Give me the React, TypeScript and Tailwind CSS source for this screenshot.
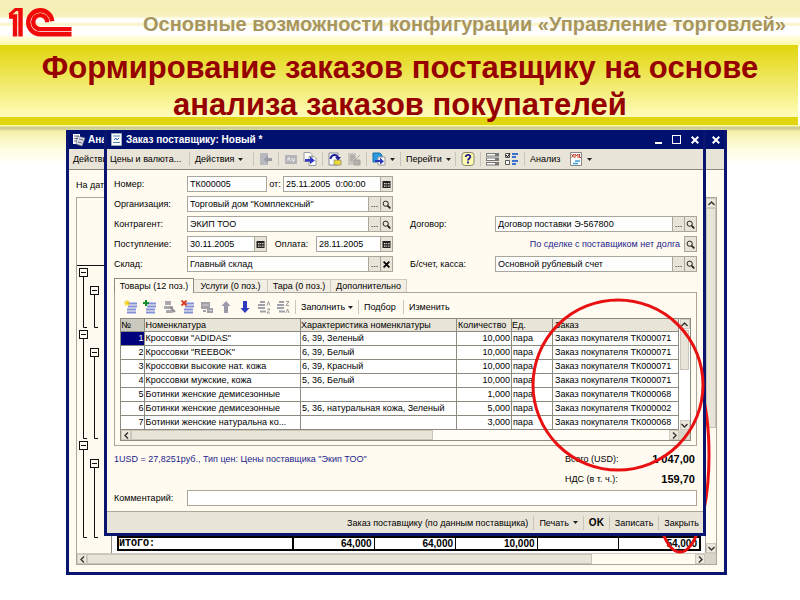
import React from 'react'
import type { ReactNode } from 'react'

interface OrderRow {
  name: string
  spec: string
  qty: string
  order: string
}

const rows: OrderRow[] = [
  { name: 'Кроссовки "ADIDAS"', spec: '6, 39, Зеленый', qty: '10,000', order: 'ТК000071' },
  { name: 'Кроссовки "REEBOK"', spec: '6, 39, Белый', qty: '10,000', order: 'ТК000071' },
  { name: 'Кроссовки высокие нат. кожа', spec: '6, 39, Красный', qty: '10,000', order: 'ТК000071' },
  { name: 'Кроссовки мужские, кожа', spec: '5, 36, Белый', qty: '10,000', order: 'ТК000071' },
  { name: 'Ботинки женские демисезонные', spec: '', qty: '1,000', order: 'ТК000068' },
  {
    name: 'Ботинки женские демисезонные',
    spec: '5, 36, натуральная кожа, Зеленый',
    qty: '5,000',
    order: 'ТК000002',
  },
  { name: 'Ботинки женские натуральна ко...', spec: '', qty: '3,000', order: 'ТК000068' },
]

function Logo() {
  return (
    <svg viewBox="0 0 66 32" className="w-[66px] h-8 shrink-0" role="img" aria-label="1C">
      <g fill="none" stroke="#f00a0a" strokeWidth="4.400">
        <path d="M12.500 1V29.500" />
        <path d="M1 9.500H7V29.500" />
        <path d="M1.500 8L7.500 2.500H12.500" strokeWidth="3.200" />
        <path d="M44.200 14.300A12 12 0 1 0 32.200 27.300H63.500" />
        <path d="M39.200 15.300A7 7 0 1 0 32.200 22.100H63.500" />
      </g>
    </svg>
  )
}

function Caret() {
  return (
    <svg viewBox="0 0 5 3" className="w-[5px] h-[3px] shrink-0">
      <path d="M0 0H5L2.500 3Z" fill="#222" />
    </svg>
  )
}

function Icon({ children }: { children: ReactNode }) {
  return (
    <svg viewBox="0 0 14 14" className="w-3.5 h-3.5 shrink-0">
      {children}
    </svg>
  )
}

function Sep() {
  return <span className="w-px h-3.5 shrink-0 bg-[#c9c5ba]" />
}

function IconButton({ label, children }: { label: string; children: ReactNode }) {
  return (
    <button type="button" aria-label={label} className="flex items-center gap-1 shrink-0">
      {children}
    </button>
  )
}

function SheetLines({ color }: { color: string }) {
  return <path d="M4 3.500H13M4 6.500H13M3 9.500H12M3 12.500H12" stroke={color} strokeWidth="2" />
}

function CalendarGlyph() {
  return (
    <svg viewBox="0 0 9 9" className="w-[9px] h-[9px]">
      <path d="M0.500 1H8.500V8H0.500Z" fill="#222" />
      <path d="M2 3H3.500V4.200H2ZM4.300 3H5.300V4.200H4.300ZM6.200 3H7.500V4.200H6.200ZM2 5.500H3.500V6.700H2ZM4.300 5.500H5.300V6.700H4.300ZM6.200 5.500H7.500V6.700H6.200Z" fill="#e9e4d8" />
    </svg>
  )
}

function SearchGlyph() {
  return (
    <svg viewBox="0 0 9 9" className="w-[9px] h-[9px]" fill="none" stroke="#222">
      <circle cx="3.700" cy="3.700" r="2.600" />
      <path d="M5.600 5.600L8.300 8.300" strokeWidth="1.700" />
    </svg>
  )
}

function CloseGlyph({ size = 'w-[7px] h-[7px]' }: { size?: string }) {
  return (
    <svg viewBox="0 0 8 8" className={size} stroke="currentColor" strokeWidth="2">
      <path d="M0.700 0.700L7.300 7.300M7.300 0.700L0.700 7.300" />
    </svg>
  )
}

type Addon = 'calendar' | 'more' | 'search' | 'clear'

function AddonButton({ kind }: { kind: Addon }) {
  return (
    <button
      type="button"
      aria-label={kind}
      className="w-3 h-full shrink-0 flex items-center justify-center border-l border-[#a9a69c] bg-[#e9e4d8] text-black"
    >
      {kind === 'calendar' && <CalendarGlyph />}
      {kind === 'search' && <SearchGlyph />}
      {kind === 'clear' && <CloseGlyph />}
      {kind === 'more' && '...'}
    </button>
  )
}

interface FieldProps {
  id: string
  value: string
  addons?: Addon[]
  className?: string
}

function Field({ id, value, addons = [], className = '' }: FieldProps) {
  return (
    <div className={`flex h-4 min-w-0 border border-[#a9a69c] bg-white ${className}`}>
      <input id={id} defaultValue={value} className="w-full min-w-0 px-0.5 bg-white outline-none" />
      {addons.map((kind) => (
        <AddonButton key={kind} kind={kind} />
      ))}
    </div>
  )
}

function ScrollArrow({ dir }: { dir: 'up' | 'down' | 'left' | 'right' }) {
  const d = {
    up: 'M1.500 6L4.500 3L7.500 6',
    down: 'M1.500 3L4.500 6L7.500 3',
    left: 'M6 1.500L3 4.500L6 7.500',
    right: 'M3 1.500L6 4.500L3 7.500',
  }[dir]
  return (
    <button
      type="button"
      aria-label={dir}
      className="w-[10px] h-[10px] shrink-0 border border-[#cfcabd] bg-[#ece7dc] flex items-center justify-center"
    >
      <svg viewBox="0 0 9 9" className="w-[9px] h-[9px] shrink-0" fill="none" stroke="#333" strokeWidth="1.400">
        <path d={d} />
      </svg>
    </button>
  )
}

function OrderTree() {
  const groups = [
    { y: 70, end: 129, child: 88 },
    { y: 132, end: 240, child: 150 },
    { y: 243, end: 339, child: 261 },
  ]
  return (
    <svg viewBox="0 0 34 355" className="w-[34px] h-[355px] shrink-0" fill="none" stroke="#111">
      <path d="M0 67.500H34" />
      {groups.map((g) => (
        <g key={g.y}>
          <path d={`M6.500 ${g.y + 9}V${g.end + 0.5}H10M17.500 ${g.child + 9}V${g.end + 0.5}H21`} />
          <rect x="2.500" y={g.y + 0.5} width="8" height="8" fill="#fffbf0" />
          <path d={`M4 ${g.y + 4.5}H9`} />
          <rect x="13.500" y={g.child + 0.5} width="8" height="8" fill="#fffbf0" />
          <path d={`M15 ${g.child + 4.5}H20`} />
        </g>
      ))}
    </svg>
  )
}

function AnalysisWindow() {
  return (
    <section className="border-[3px] border-t-0 border-[#0a1570] bg-[#fffbf0]">
      <header className="h-[19px] pl-[3px] pr-1 flex items-center justify-between bg-[#00106e] text-white">
        <h2 className="flex items-center gap-0.5 text-[10px] font-bold">
          <Icon>
            <path d="M1 1H8V11H1Z" fill="#fff" />
            <path d="M5 3L13 5L10 13L4 11Z" fill="#d8dce8" stroke="#777" strokeWidth=".6" />
            <path d="M2 3H7M2 5.500H6M2 8H5M7 6L11 7M6 9L10 10" stroke="#667" />
          </Icon>
          Анализ
        </h2>
        <button type="button" aria-label="Закрыть окно">
          <CloseGlyph size="w-2 h-2" />
        </button>
      </header>
      <div className="h-[21px] pl-1 flex items-center border-b border-[#8d8a80] bg-[#e9e4d8]">
        <button type="button">Действия</button>
      </div>
      <p className="h-[27px] pl-[7px] pt-[9px]">На дату:</p>
      <div className="ml-[7px] mr-[7px] mb-[7px] border border-[#a9a69c]">
        <div className="flex">
          <OrderTree />
          <div className="flex-1 min-w-0 flex flex-col justify-end border-l border-[#8d8a80] bg-white pl-[5px] pr-1 pb-0.5">
            <table className="w-full table-fixed border-2 border-black text-[10px] leading-[11px] font-bold">
              <colgroup>
                <col className="w-[30%]" />
                <col className="w-[14%]" />
                <col className="w-[14%]" />
                <col className="w-[14%]" />
                <col className="w-[14%]" />
                <col className="w-[14%]" />
              </colgroup>
              <tbody>
                <tr className="text-right">
                  <th className="border-r-2 border-black text-left font-['Liberation_Mono',monospace]">
                    ИТОГО:
                  </th>
                  <td className="border-r border-black pr-0.5">64,000</td>
                  <td className="border-r border-black pr-0.5">64,000</td>
                  <td className="border-r border-black pr-0.5">10,000</td>
                  <td className="border-r border-black" />
                  <td className="pr-0.5">54,000</td>
                </tr>
              </tbody>
            </table>
          </div>
          <div className="w-[11px] shrink-0 flex flex-col border-l border-[#a9a69c]">
            <ScrollArrow dir="up" />
            <div className="h-[220px] mb-auto border border-[#c9c5ba] bg-[#e9e4d8]" />
            <ScrollArrow dir="down" />
          </div>
        </div>
        <div className="flex h-[11px] border-t border-[#cfcabd]">
          <ScrollArrow dir="left" />
          <div className="w-[79%] mr-auto border border-[#c9c5ba] bg-[#e9e4d8]" />
          <ScrollArrow dir="right" />
          <span className="w-[11px] bg-[#d9d4c8]" />
        </div>
      </div>
    </section>
  )
}

function OrderToolbar() {
  return (
    <div className="h-[21px] pl-[3px] flex items-center gap-[5px] border-b border-[#8d8a80] bg-[#e9e4d8] whitespace-nowrap">
      <button type="button" className="w-[74px] text-left">Цены и валюта...</button>
      <Sep />
      <button type="button" className="w-[53px] flex items-center gap-1">
        Действия <Caret />
      </button>
      <Sep />
      <IconButton label="Найти в списке">
        <Icon>
          <path d="M1 1H9V13H1Z" fill="#b9b9c0" />
          <path d="M13 6H9V3.500L5 7.500L9 11.500V9H13Z" fill="#9b9ba8" />
        </Icon>
      </IconButton>
      <Sep />
      <IconButton label="Обновить">
        <Icon>
          <path d="M1 3H13V12H1Z" fill="#b4b4ba" />
          <path d="M4 9V6H6M10 6V9H8M4 6L7 9M10 9L7 6" stroke="#eee" fill="none" />
        </Icon>
      </IconButton>
      <IconButton label="Скопировать">
        <Icon>
          <path d="M1 0.500H7L9 2.500V9.500H1ZM6 4.500H11L13 6.500V13.500H6Z" fill="#fff" stroke="#999" />
          <path d="M2 4V7H7V4.500L12 8.500L7 12V9.500H2Z" fill="#3038c8" />
        </Icon>
      </IconButton>
      <Sep />
      <IconButton label="Провести">
        <Icon>
          <path d="M1 1H10V13H1Z" fill="#fff" stroke="#889" />
          <path d="M6 8H13V13H6Z" fill="#e9d93c" stroke="#776" strokeWidth=".6" />
          <path d="M2.500 7C3 2 9 1.500 10 6" stroke="#20209a" strokeWidth="2" fill="none" />
          <path d="M7 5H13L10 8.500Z" fill="#20209a" />
        </Icon>
      </IconButton>
      <IconButton label="Отменить проведение">
        <Icon>
          <path d="M1 1H9V13H1Z" fill="#c9c6c0" />
          <path d="M3 4H8M3 6H8M3 8H6" stroke="#999" />
          <path d="M7 8H13V13H7ZM13 3L8 8" fill="#b4b1aa" stroke="#a5a29b" />
        </Icon>
      </IconButton>
      <Sep />
      <IconButton label="Ввести на основании">
        <Icon>
          <path d="M1 1H8L10 3V10H1Z" fill="#2a9be0" stroke="#1870a8" />
          <path d="M6 5H13V13H6Z" fill="#fff" stroke="#999" />
          <path d="M3 4V8H8V5.500L12 9.500L8 12.500V10H3Z" fill="#2838b8" />
        </Icon>
        <Caret />
      </IconButton>
      <Sep />
      <button type="button" className="w-11 flex items-center gap-1">
        Перейти <Caret />
      </button>
      <Sep />
      <IconButton label="Справка">
        <Icon>
          <rect x="1" y="0.500" width="12" height="13" rx="3" fill="#fffbb0" stroke="#8a8a70" />
          <path d="M4.800 5C4.800 2 9.500 2.300 9.300 5C9.200 6.500 7 6.500 7 8.500M7 9.500V11.500" stroke="#1c1c8c" strokeWidth="1.800" fill="none" />
        </Icon>
      </IconButton>
      <Sep />
      <IconButton label="Строки">
        <Icon>
          <path d="M0 1H13V4.500H0ZM0 5.500H13V9H0ZM0 10H13V13.500H0Z" fill="#777" />
          <path d="M1 2H9V3.500H1ZM1 6.500H9V8H1ZM1 11H9V12.500H1Z" fill="#fff" />
        </Icon>
      </IconButton>
      <IconButton label="Отбор">
        <Icon>
          <path d="M0.500 1.500H4.500V5.500H0.500ZM0.500 8.500H4.500V12.500H0.500Z" fill="#fff" stroke="#555" />
          <path d="M1 3L2.500 5L5 1" stroke="#111" fill="none" />
          <path d="M7 2H13M7 5H11M7 9H13M7 12H11" stroke="#3d6fd0" strokeWidth="2" />
        </Icon>
      </IconButton>
      <Sep />
      <button type="button" className="w-[34px] text-left">Анализ</button>
      <IconButton label="XML">
        <Icon>
          <path d="M1.500 0.500H12.500V13.500H1.500Z" fill="#fff" stroke="#888" />
          <path d="M2.500 2L5 5.500M5 2L2.500 5.500M6 6V2L7.500 4L9 2V6M10.500 2V5.500H12" stroke="#c8402c" strokeWidth="1" fill="none" />
          <path d="M6 9H11M4 11.500H9" stroke="#3ca0dc" strokeWidth="1.500" />
        </Icon>
        <Caret />
      </IconButton>
    </div>
  )
}

function RowsToolbar() {
  return (
    <div className="h-3.5 pl-1 flex items-center gap-[5px] whitespace-nowrap">
      <IconButton label="Добавить">
        <Icon>
          <SheetLines color="#8392d8" />
          <path d="M3 0V6M0 3H6M1 1L5 5M5 1L1 5" stroke="#f0d000" />
        </Icon>
      </IconButton>
      <IconButton label="Скопировать строку">
        <Icon>
          <SheetLines color="#8392d8" />
          <path d="M3 0V6M0 3H6" stroke="#109030" strokeWidth="2" />
        </Icon>
      </IconButton>
      <IconButton label="Изменить строку">
        <Icon>
          <path d="M3 1H9V5H3ZM2 6H11V9H2ZM4 10H11V13H4Z" fill="#a8a8ae" />
          <path d="M8 7L13 12" stroke="#8c8c94" strokeWidth="2" />
        </Icon>
      </IconButton>
      <IconButton label="Удалить">
        <Icon>
          <SheetLines color="#8392d8" />
          <path d="M0.500 0.500L5.500 5.500M5.500 0.500L0.500 5.500" stroke="#e03818" strokeWidth="1.800" />
        </Icon>
      </IconButton>
      <IconButton label="Записать строку">
        <Icon>
          <path d="M1 2H10V9H1ZM7 8H13V13H7ZM3 10H6V12H3Z" fill="#a0a0a6" />
          <path d="M2.500 5H8.500M9 10.500H12" stroke="#d8d8d8" />
        </Icon>
      </IconButton>
      <IconButton label="Вверх">
        <Icon>
          <path d="M7 1L11.500 6H9V13H5V6H2.500Z" fill="#9a9aac" />
        </Icon>
      </IconButton>
      <IconButton label="Вниз">
        <Icon>
          <path d="M7 13L11.500 8H9V1H5V8H2.500Z" fill="#3038c0" />
        </Icon>
      </IconButton>
      <IconButton label="По возрастанию">
        <Icon>
          <path d="M3 2H8M1 5H8M1 8H8M3 11.500H9" stroke="#a0a0aa" strokeWidth="2" />
          <path d="M10 5.500L11.500 1.500L13 5.500M10 9H13L10 13H13" stroke="#999" fill="none" />
        </Icon>
      </IconButton>
      <IconButton label="По убыванию">
        <Icon>
          <path d="M3 2H8M1 5H8M1 8H8M3 11.500H9" stroke="#a0a0aa" strokeWidth="2" />
          <path d="M10 1.500H13L10 5.500H13M10 13L11.500 9L13 13" stroke="#999" fill="none" />
        </Icon>
      </IconButton>
      <Sep />
      <button type="button" className="w-[52px] flex items-center gap-[3px]">
        Заполнить <Caret />
      </button>
      <Sep />
      <button type="button" className="w-[34px] text-left">Подбор</button>
      <Sep />
      <button type="button">Изменить</button>
    </div>
  )
}

function GoodsTable() {
  return (
    <div className="border border-[#8d8a80] bg-white">
      <div className="flex">
        <table className="flex-1 w-full table-fixed border-collapse whitespace-nowrap">
          <colgroup>
            <col className="w-[23px]" />
            <col />
            <col className="w-[156px]" />
            <col className="w-[55px]" />
            <col className="w-[41px]" />
            <col className="w-[126px]" />
          </colgroup>
          <thead>
            <tr className="h-3 bg-[#e9e4d8] text-left leading-3">
              <th className="border-r border-b border-[#8d8a80] font-normal bg-[#cbc8bd]">№</th>
              <th className="border-r border-b border-[#8d8a80] font-normal pl-px">Номенклатура</th>
              <th className="border-r border-b border-[#8d8a80] font-normal">Характеристика номенклатуры</th>
              <th className="border-r border-b border-[#8d8a80] font-normal pl-px">Количество</th>
              <th className="border-r border-b border-[#8d8a80] font-normal">Ед.</th>
              <th className="border-r border-b border-[#8d8a80] font-normal pl-0.5">Заказ</th>
            </tr>
          </thead>
          <tbody>
            {rows.map((row, idx) => (
              <tr key={idx} className="h-3.5 leading-[13px]">
                <td
                  className={`border-r border-b border-[#8d8a80] text-right ${idx === 0 ? 'bg-[#00007c] text-white' : ''}`}
                >
                  {idx + 1}
                </td>
                <td className="border-r border-b border-[#8d8a80] pl-px">{row.name}</td>
                <td className="border-r border-b border-[#8d8a80] pl-px">{row.spec}</td>
                <td className="border-r border-b border-[#8d8a80] pr-px text-right">{row.qty}</td>
                <td className="border-r border-b border-[#8d8a80] pl-px">пара</td>
                <td className="border-r border-b border-[#8d8a80] pl-0.5">Заказ покупателя {row.order}</td>
              </tr>
            ))}
          </tbody>
        </table>
        <div className="w-[11px] shrink-0 flex flex-col items-center">
          <ScrollArrow dir="up" />
          <div className="w-[9px] h-10 mt-px mb-auto border border-[#c9c5ba] bg-[#e9e4d8]" />
          <ScrollArrow dir="down" />
        </div>
      </div>
      <div className="flex h-[10px] bg-[#fffdf6]">
        <ScrollArrow dir="left" />
        <div className="w-[53%] mr-auto border border-[#c9c5ba] bg-[#e9e4d8]" />
        <ScrollArrow dir="right" />
        <span className="w-[11px] bg-[#d9d4c8]" />
      </div>
    </div>
  )
}

function OrderWindow() {
  return (
    <section className="absolute top-0 left-[38px] right-[21px] border-[3px] border-t-0 border-[#0a1570] bg-[#fffbf0]">
      <header className="h-[19px] pl-[3px] pr-1 flex items-center justify-between bg-[#00106e] text-white">
        <h2 className="flex items-center gap-0.5 text-[10px] font-bold">
          <Icon>
            <path d="M1.500 0.500H11.500V12.500H1.500Z" fill="#fff" stroke="#9ab" />
            <path d="M3 3H10M3 9.500H10" stroke="#58a" />
            <path d="M4 7L6 5L7 7L9 5" stroke="#2a70b8" fill="none" />
          </Icon>
          Заказ поставщику: Новый *
        </h2>
        <div className="flex items-center gap-[10px]">
          <button type="button" aria-label="Свернуть" className="w-[7px] h-2 border-b-2 border-white" />
          <button type="button" aria-label="Развернуть" className="w-[9px] h-[9px] border border-white" />
          <button type="button" aria-label="Закрыть окно">
            <CloseGlyph size="w-2 h-2" />
          </button>
        </div>
      </header>
      <OrderToolbar />

      <div className="pl-[7px] pr-[6px] pt-[6px] pb-[5px]">
        <div className="grid grid-cols-[73px_206px_102px_minmax(0,1fr)] gap-y-1 leading-4 whitespace-nowrap">
          <label htmlFor="number" className="col-start-1">Номер:</label>
          <div className="flex items-center justify-between">
            <Field id="number" value="ТК000005" className="w-20" />
            <label htmlFor="date">от:</label>
            <Field id="date" value="25.11.2005  0:00:00" addons={['calendar']} className="w-[110px]" />
          </div>

          <label htmlFor="org" className="col-start-1">Организация:</label>
          <Field id="org" value={'Торговый дом "Комплексный"'} addons={['more', 'search']} />

          <label htmlFor="partner" className="col-start-1">Контрагент:</label>
          <Field id="partner" value="ЭКИП ТОО" addons={['more', 'search']} />
          <label htmlFor="contract" className="pl-[17px]">Договор:</label>
          <Field id="contract" value="Договор поставки Э-567800" addons={['more', 'search']} />

          <label htmlFor="arrival" className="col-start-1">Поступление:</label>
          <div className="flex items-center justify-between">
            <Field id="arrival" value="30.11.2005" addons={['calendar']} className="w-20" />
            <label htmlFor="payment">Оплата:</label>
            <Field id="payment" value="28.11.2005" addons={['calendar']} className="w-[77px]" />
          </div>
          <div className="col-start-4 flex justify-end gap-1 text-[#1c1c8c]">
            По сделке с поставщиком нет долга
            <span className="flex h-4 border border-l-0 border-[#a9a69c]">
              <AddonButton kind="search" />
            </span>
          </div>

          <label htmlFor="store" className="col-start-1">Склад:</label>
          <Field id="store" value="Главный склад" addons={['more', 'clear']} />
          <label htmlFor="account" className="pl-[17px]">Б/счет, касса:</label>
          <Field id="account" value="Основной рублевый счет" addons={['more', 'search']} />
        </div>

        <div role="tablist" className="mt-[6px] h-3.5 flex items-end leading-3 whitespace-nowrap">
          <button type="button" role="tab" aria-selected="true" className="relative -mb-px h-[15px] w-20 border border-b-0 border-[#8d8a80] bg-[#fffbf0]">
            Товары (12 поз.)
          </button>
          <button type="button" role="tab" className="h-[13px] w-[74px] border-r border-t border-[#cfcabd] bg-[#f3eee3]">
            Услуги (0 поз.)
          </button>
          <button type="button" role="tab" className="h-[13px] w-[63px] border-r border-t border-[#cfcabd] bg-[#f3eee3]">
            Тара (0 поз.)
          </button>
          <button type="button" role="tab" className="h-[13px] w-[76px] border-r border-t border-[#cfcabd] bg-[#f3eee3]">
            Дополнительно
          </button>
        </div>
        <div className="border border-[#a9a69c] px-[5px] pt-[7px] pb-1">
          <RowsToolbar />
          <div className="mt-1">
            <GoodsTable />
          </div>
        </div>

        <div className="mt-[3px] flex justify-between leading-5">
          <p className="text-[#1c1c8c]">1USD = 27,8251руб., Тип цен: Цены поставщика "Экип ТОО"</p>
          <dl className="grid grid-cols-[74px_56px] pr-[2px]">
            <dt>Всего (USD):</dt>
            <dd className="text-[11px] font-bold text-right">1 047,00</dd>
            <dt>НДС (в т. ч.):</dt>
            <dd className="text-[11px] font-bold text-right">159,70</dd>
          </dl>
        </div>
        <div className="mt-px flex items-center">
          <label htmlFor="comment" className="w-[73px]">Комментарий:</label>
          <Field id="comment" value="" className="flex-1" />
        </div>
      </div>

      <footer className="h-[22px] pr-1 flex items-center justify-end gap-[5px] border-t border-[#a9a69c] bg-[#e9e4d8] whitespace-nowrap">
        <button type="button">Заказ поставщику (по данным поставщика)</button>
        <Sep />
        <button type="button" className="flex items-center gap-1">
          Печать <Caret />
        </button>
        <Sep />
        <button type="button" className="text-[10px] font-bold">OK</button>
        <Sep />
        <button type="button">Записать</button>
        <Sep />
        <button type="button">Закрыть</button>
      </footer>
    </section>
  )
}

export default function App() {
  return (
    <main className="min-h-screen bg-white font-['Liberation_Sans',sans-serif] text-[9px] leading-3 text-black">
      <header className="h-[45px] pl-2 pr-3.5 flex items-center justify-between bg-[linear-gradient(to_bottom,#f5efb8_0,#f5efb8_14px,#f8f4c8_17px,#fff_19px,#fff_22px,#f8f2bc_24px,#fff_27px,#fff_34px,#fffdd8_38px,#fdf9a8_45px)]">
        <Logo />
        <p className="text-[20px] leading-6 pt-[3px] font-bold text-[#a8965f] whitespace-nowrap">
          Основные возможности конфигурации «Управление торговлей»
        </p>
      </header>
      <div className="mr-0.5 h-20 border-b-8 border-[#e0d50f] bg-[linear-gradient(to_bottom,#e1d50c,#fffcbc)]">
        <h1 className="pt-1 pl-0.5 text-center text-[31px] leading-[37px] font-bold text-[#960000]">
          Формирование заказов поставщику на основе
          <br />
          анализа заказов покупателей
        </h1>
      </div>
      <div className="pt-[5px] pl-[66px] pr-[73px] bg-[linear-gradient(to_bottom,#fffca0_0,#fffca0_1px,#c9c88c_2px,#d0cf96_4px,#f4f0a8_6px,#fffde0_24px,#fff_40px)]">
        <div className="relative">
          <AnalysisWindow />
          <svg viewBox="0 0 66 200" className="absolute top-[225px] right-[14px] w-[66px] h-[200px]">
            <ellipse cx="33" cy="100" rx="29" ry="97" fill="none" stroke="#e81010" strokeWidth="3" />
          </svg>
          <OrderWindow />
          <svg viewBox="0 0 176 176" className="pointer-events-none absolute top-[167px] right-[21px] w-44 h-44">
            <ellipse cx="88" cy="88" rx="85" ry="85" fill="none" stroke="#e81010" strokeWidth="3" />
          </svg>
        </div>
      </div>
    </main>
  )
}
